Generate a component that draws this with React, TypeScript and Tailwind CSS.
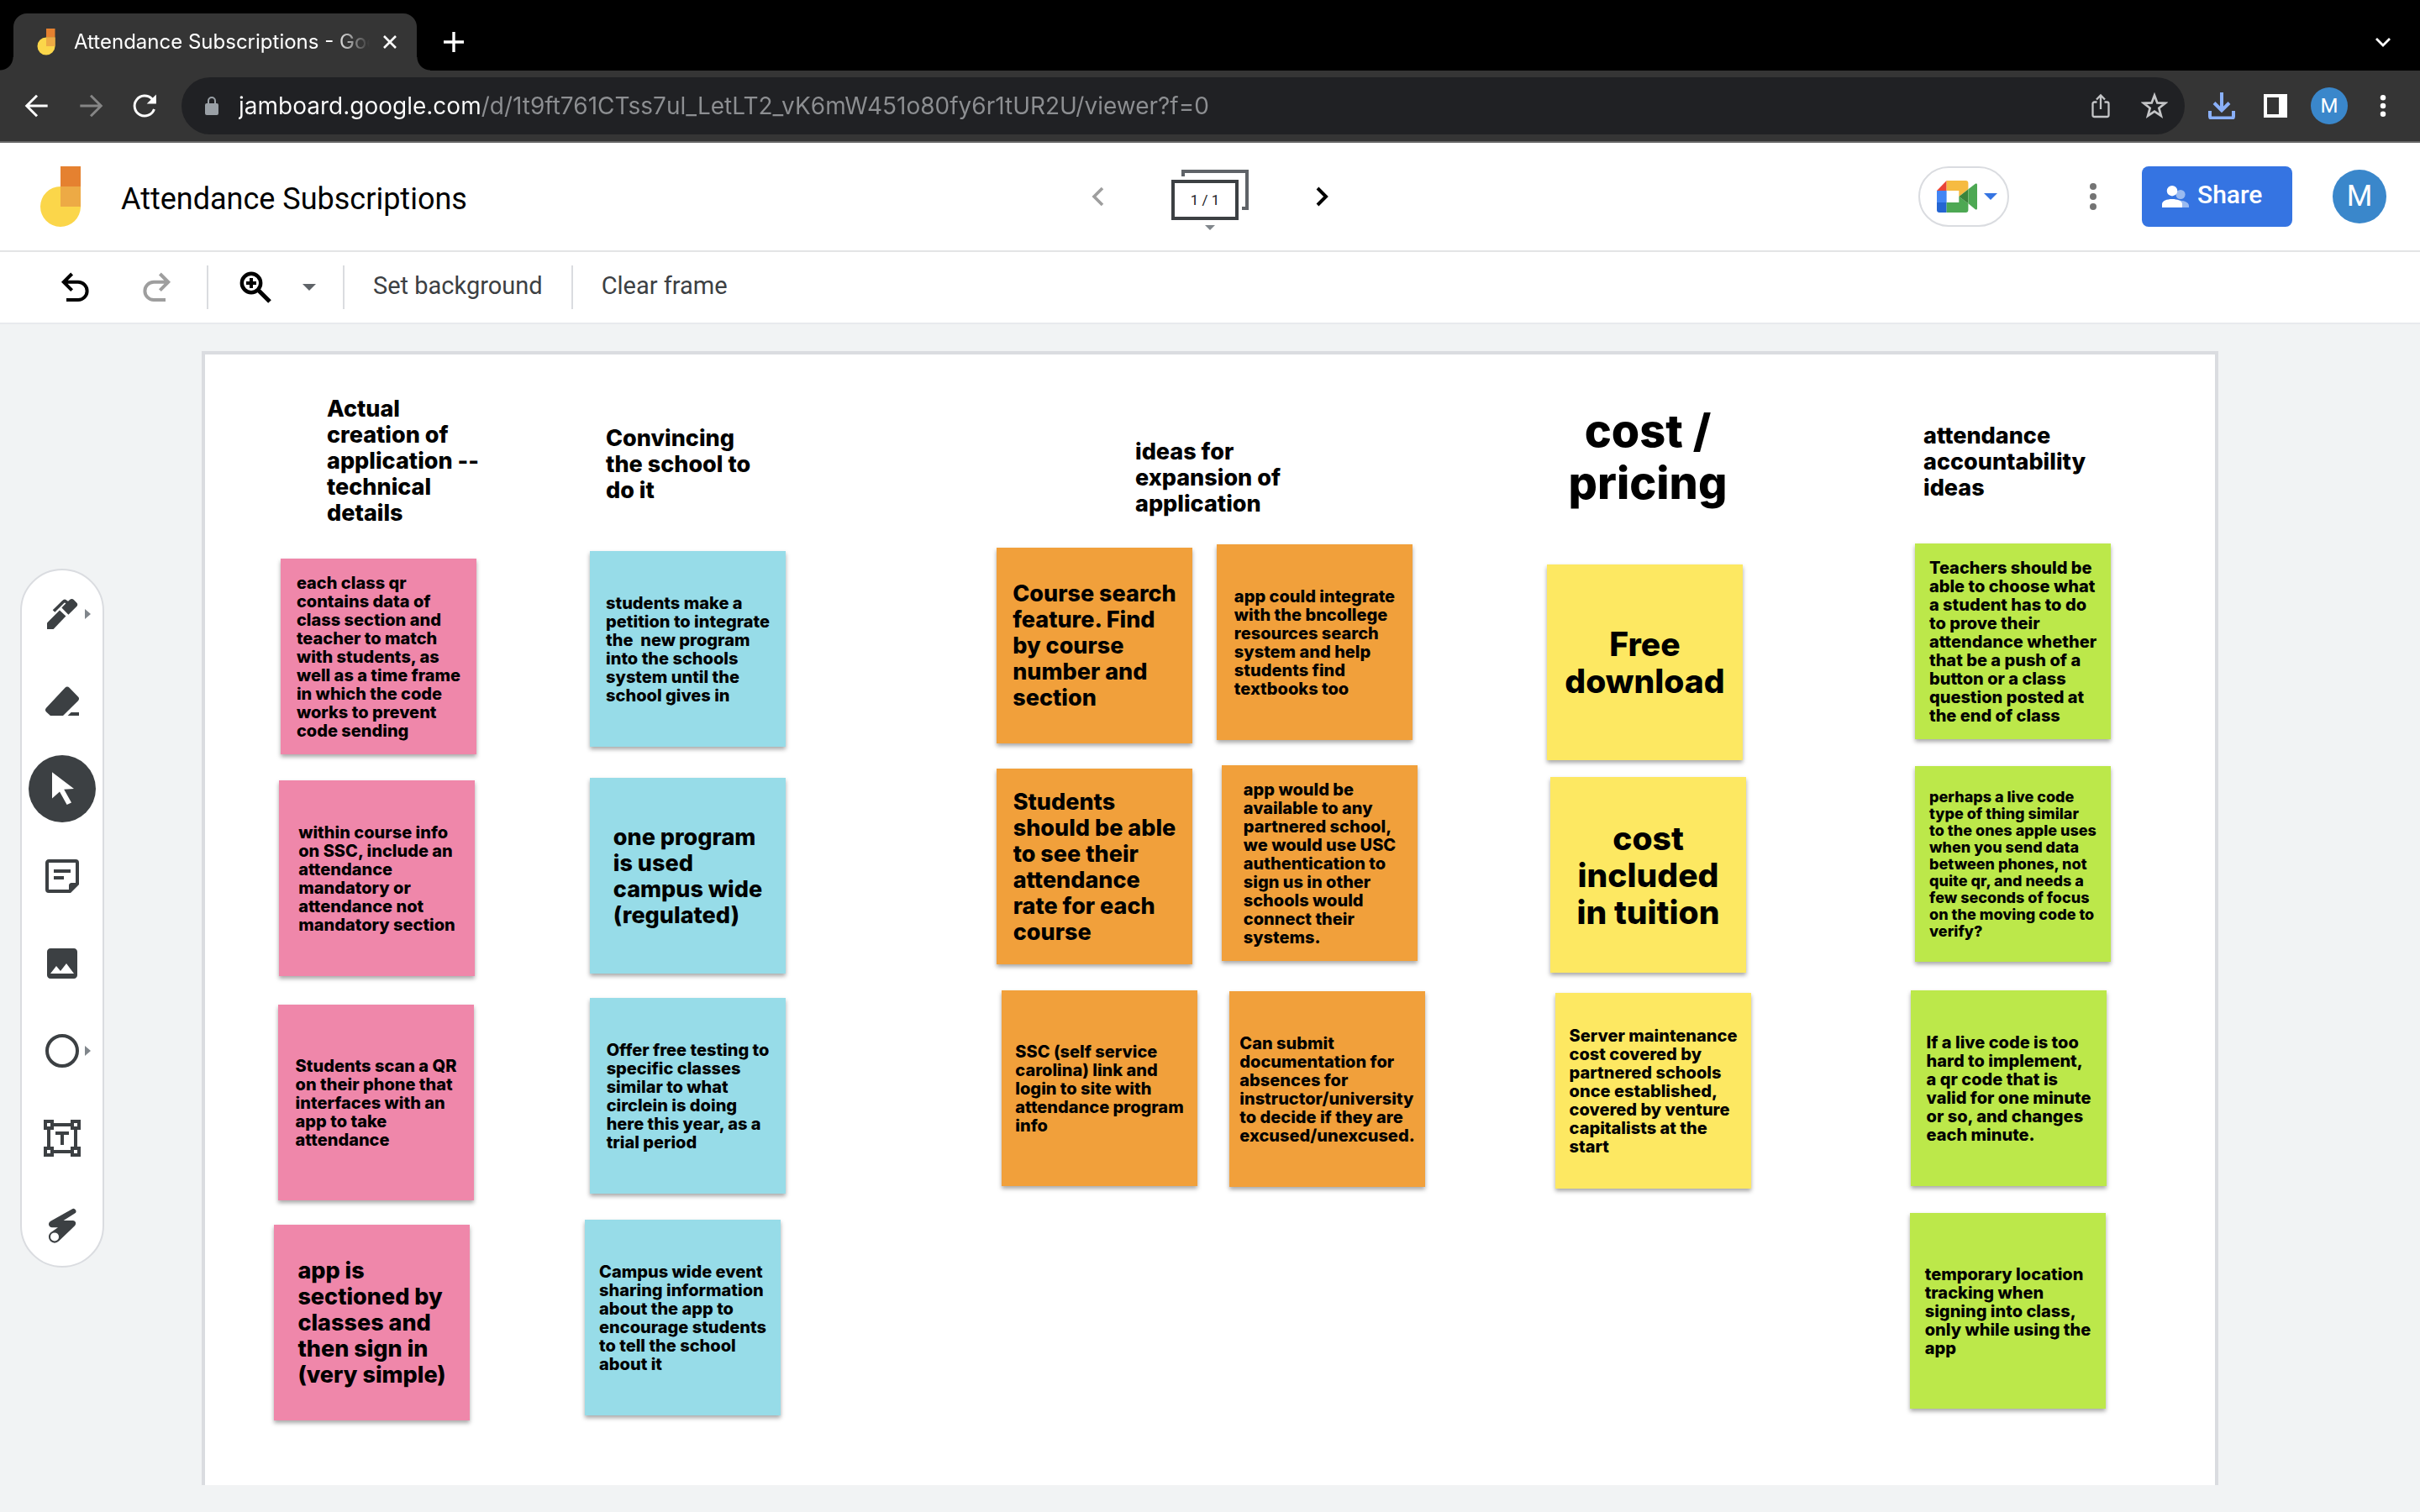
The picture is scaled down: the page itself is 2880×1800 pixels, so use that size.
import type { ReactNode } from "react";

type Note = { place: string; color: string; text: string; size?: string };

const SMALL = "text-[20px] leading-[22px]";
const TINY = "text-[18px] leading-[20px]";
const MEDIUM = "text-[27px] leading-[31px]";
const LARGE = "text-[39px] leading-[44px] text-center";

const PINK = "bg-[#ef87aa]";
const BLUE = "bg-[#97dce8]";
const ORANGE = "bg-[#f1a03b]";
const YELLOW = "bg-[#fde862]";
const GREEN = "bg-[#bce84a]";

// Sticky notes, placed freely on the frame.
const notes: Note[] = [
  { place: "left-[90px] top-[243px]", color: PINK, text: "each class qr\ncontains data of\nclass section and\nteacher to match\nwith students, as\nwell as a time frame\nin which the code\nworks to prevent\ncode sending" },
  { place: "left-[88px] top-[507px]", color: PINK, text: "within course info\non SSC, include an\nattendance\nmandatory or\nattendance not\nmandatory section" },
  { place: "left-[87px] top-[774px]", color: PINK, text: "Students scan a QR\non their phone that\ninterfaces with an\napp to take\nattendance" },
  { place: "left-[82px] top-[1036px]", color: PINK, size: MEDIUM, text: "app is\nsectioned by\nclasses and\nthen sign in\n(very simple)" },
  { place: "left-[458px] top-[234px]", color: BLUE, text: "students make a\npetition to integrate\nthe  new program\ninto the schools\nsystem until the\nschool gives in" },
  { place: "left-[458px] top-[504px]", color: BLUE, size: MEDIUM, text: "one program\nis used\ncampus wide\n(regulated)" },
  { place: "left-[458px] top-[766px]", color: BLUE, text: "Offer free testing to\nspecific classes\nsimilar to what\ncirclein is doing\nhere this year, as a\ntrial period" },
  { place: "left-[452px] top-[1030px]", color: BLUE, text: "Campus wide event\nsharing information\nabout the app to\nencourage students\nto tell the school\nabout it" },
  { place: "left-[942px] top-[230px]", color: ORANGE, size: MEDIUM, text: "Course search\nfeature. Find\nby course\nnumber and\nsection" },
  { place: "left-[1204px] top-[226px]", color: ORANGE, text: "app could integrate\nwith the bncollege\nresources search\nsystem and help\nstudents find\ntextbooks too" },
  { place: "left-[942px] top-[493px]", color: ORANGE, size: MEDIUM, text: "Students\nshould be able\nto see their\nattendance\nrate for each\ncourse" },
  { place: "left-[1210px] top-[489px]", color: ORANGE, text: "app would be\navailable to any\npartnered school,\nwe would use USC\nauthentication to\nsign us in other\nschools would\nconnect their\nsystems." },
  { place: "left-[948px] top-[757px]", color: ORANGE, text: "SSC (self service\ncarolina) link and\nlogin to site with\nattendance program\ninfo" },
  { place: "left-[1219px] top-[758px]", color: ORANGE, text: "Can submit\ndocumentation for\nabsences for\ninstructor/university\nto decide if they are\nexcused/unexcused." },
  { place: "left-[1597px] top-[250px]", color: YELLOW, size: LARGE, text: "Free\ndownload" },
  { place: "left-[1601px] top-[503px]", color: YELLOW, size: LARGE, text: "cost\nincluded\nin tuition" },
  { place: "left-[1607px] top-[760px]", color: YELLOW, text: "Server maintenance\ncost covered by\npartnered schools\nonce established,\ncovered by venture\ncapitalists at the\nstart" },
  { place: "left-[2035px] top-[225px]", color: GREEN, text: "Teachers should be\nable to choose what\na student has to do\nto prove their\nattendance whether\nthat be a push of a\nbutton or a class\nquestion posted at\nthe end of class" },
  { place: "left-[2035px] top-[490px]", color: GREEN, size: TINY, text: "perhaps a live code\ntype of thing similar\nto the ones apple uses\nwhen you send data\nbetween phones, not\nquite qr, and needs a\nfew seconds of focus\non the moving code to\nverify?" },
  { place: "left-[2030px] top-[757px]", color: GREEN, text: "If a live code is too\nhard to implement,\na qr code that is\nvalid for one minute\nor so, and changes\neach minute." },
  { place: "left-[2029px] top-[1022px]", color: GREEN, text: "temporary location\ntracking when\nsigning into class,\nonly while using the\napp" },
];

// Free-standing text boxes that title each group of notes.
const headings: { place: string; size: string; text: string }[] = [
  { place: "left-[145px] top-[49px]", size: MEDIUM, text: "Actual\ncreation of\napplication --\ntechnical\ndetails" },
  { place: "left-[477px] top-[84px]", size: MEDIUM, text: "Convincing\nthe school to\ndo it" },
  { place: "left-[1107px] top-[100px]", size: MEDIUM, text: "ideas for\nexpansion of\napplication" },
  { place: "left-[1597px] top-[60px] w-[240px]", size: "text-[54px] leading-[62px] text-center", text: "cost /\npricing" },
  { place: "left-[2045px] top-[81px]", size: MEDIUM, text: "attendance\naccountability\nideas" },
];

function Logo({ className }: { className: string }) {
  return (
    <svg viewBox="0 0 48 73" className={className} aria-hidden="true">
      <path d="M24 0h24v24H24z" fill="#e58130" />
      <path d="M24 24h24v24.5a24 24 0 1 1-24-24.5z" fill="#fbd64a" />
      <path d="M24 24h24v24H24z" fill="#edaa45" />
    </svg>
  );
}

function Icon({ children, className = "size-12", box = "0 0 24 24" }: { children: ReactNode; className?: string; box?: string }) {
  return (
    <svg viewBox={box} className={className} fill="currentColor" aria-hidden="true">
      {children}
    </svg>
  );
}

function Dots({ className }: { className: string }) {
  return (
    <Icon box="0 0 8 32" className={className}>
      <circle cx="4" cy="4" r="4" />
      <circle cx="4" cy="16" r="4" />
      <circle cx="4" cy="28" r="4" />
    </Icon>
  );
}

function Caret({ className }: { className: string }) {
  return (
    <Icon box="0 0 16 8" className={className}>
      <path d="M0 0h16L8 8z" />
    </Icon>
  );
}

function TabStrip() {
  return (
    <div className="flex h-[84px] items-end bg-black pl-4">
      <div className="relative flex h-[68px] w-[480px] items-center rounded-t-[16px] bg-[#353535] pl-7 pr-5">
        <span className="absolute -left-4 bottom-0 size-4 bg-[radial-gradient(circle_at_0_0,transparent_15px,#353535_16px)]" />
        <span className="absolute -right-4 bottom-0 size-4 bg-[radial-gradient(circle_at_100%_0,transparent_15px,#353535_16px)]" />
        <Logo className="h-8 w-[22px] shrink-0" />
        <span className="ml-[22px] flex-1 overflow-hidden whitespace-nowrap font-['Inter'] text-[24px] leading-8 text-white [mask-image:linear-gradient(90deg,#000_310px,transparent_352px)]">
          Attendance Subscriptions - Google Jamboard
        </span>
        <button aria-label="Close tab" className="grid size-6 shrink-0 place-items-center text-white">
          <Icon className="size-4" box="0 0 16 16">
            <path d="M1 1l14 14M15 1L1 15" stroke="currentColor" strokeWidth="2.6" />
          </Icon>
        </button>
      </div>
      <div className="flex h-[68px] flex-1 items-center justify-between pl-8 pr-[34px] text-white">
        <button aria-label="New tab">
          <Icon className="size-6">
            <path d="M12 0v24M0 12h24" stroke="currentColor" strokeWidth="3.4" />
          </Icon>
        </button>
        <button aria-label="Search tabs">
          <Icon className="h-3 w-5" box="0 0 20 12">
            <path d="M2 2l8 8 8-8" fill="none" stroke="currentColor" strokeWidth="2.8" />
          </Icon>
        </button>
      </div>
    </div>
  );
}

function AddressBar() {
  return (
    <div className="flex h-[86px] items-center border-b-2 border-[#666] bg-[#353535] pl-7 pr-10 text-white">
      <div className="flex items-center gap-8">
        <button aria-label="Back">
          <Icon className="size-8">
            <path d="M21.5 12H3M12 2.8L2.8 12l9.2 9.2" fill="none" stroke="currentColor" strokeWidth="2.2" />
          </Icon>
        </button>
        <button aria-label="Forward" className="text-[#868686]">
          <Icon className="size-8">
            <path d="M2.5 12H21M12 2.8l9.2 9.2-9.2 9.2" fill="none" stroke="currentColor" strokeWidth="2.2" />
          </Icon>
        </button>
        <button aria-label="Reload">
          <Icon className="size-8">
            <path d="M20.6 15A9 9 0 1 1 18.6 5.8L21.5 8.7" fill="none" stroke="currentColor" strokeWidth="2.2" />
            <path d="M22.4 1.8v8.4H14z" />
          </Icon>
        </button>
      </div>
      <div className="ml-7 flex h-[68px] flex-1 items-center rounded-full bg-[#202124] pl-7 pr-[20px]">
        <Icon className="h-[22px] w-4 text-[#9aa0a6]" box="0 0 16 22">
          <path d="M2 8h12a2 2 0 0 1 2 2v10a2 2 0 0 1-2 2H2a2 2 0 0 1-2-2V10a2 2 0 0 1 2-2z" />
          <path d="M4 9V5a4 4 0 0 1 8 0v4" fill="none" stroke="currentColor" strokeWidth="2" />
        </Icon>
        <input
          aria-label="Address"
          defaultValue="jamboard.google.com/d/1t9ft761CTss7ul_LetLT2_vK6mW451o80fy6r1tUR2U/viewer?f=0"
          className="ml-6 h-10 flex-1 bg-[linear-gradient(90deg,#fff_288px,#8d8f92_288px)] bg-clip-text font-['Inter'] text-[28px] leading-10 text-transparent caret-white outline-none"
        />
        <button aria-label="Share this page" className="mr-9 text-[#c4c5c7]">
          <Icon className="h-[30px] w-[24px]" box="0 0 24 30">
            <path d="M7.500 10.500H4.500a2 2 0 0 0-2 2v13.500a2 2 0 0 0 2 2h15a2 2 0 0 0 2-2V12.500a2 2 0 0 0-2-2h-3M12 19V3M7 7.500l5-5 5 5" fill="none" stroke="currentColor" strokeWidth="2.3" />
          </Icon>
        </button>
        <button aria-label="Bookmark this tab" className="text-[#c4c5c7]">
          <Icon className="size-8">
            <path d="M12 2.600l2.500 6.700 7.100.3-5.600 4.400 1.900 6.900-5.900-4-5.900 4L8 14 2.400 9.600l7.100-.3z" fill="none" stroke="currentColor" strokeWidth="2" />
          </Icon>
        </button>
      </div>
      <button aria-label="Downloads" className="ml-7 text-[#8ab0f8]">
        <Icon className="size-8" box="0 0 32 32">
          <path d="M2 22v6.500a2 2 0 0 0 2 2h24a2 2 0 0 0 2-2V22M16 0v22M7 12.500l9 9 9-9" fill="none" stroke="currentColor" strokeWidth="4" />
        </Icon>
      </button>
      <button aria-label="Side panel" className="ml-[34px]">
        <Icon className="size-7" box="0 0 28 28">
          <path fillRule="evenodd" d="M0 0h28v28H0zM4 4v20h14V4z" />
        </Icon>
      </button>
      <button aria-label="Profile" className="ml-7 grid size-11 place-items-center rounded-full bg-[#3a87cb] font-['Roboto'] text-[24px] leading-8">
        M
      </button>
      <button aria-label="Browser menu" className="ml-[38px]">
        <Dots className="h-[26px] w-2" />
      </button>
    </div>
  );
}

function Header() {
  return (
    <header className="grid h-[130px] grid-cols-[1fr_auto_1fr] items-center border-b-2 border-[#e3e4e5] bg-white px-10">
      <div className="flex items-center gap-12 pl-2">
        <a href="#home" aria-label="Jamboard home">
          <Logo className="h-[73px] w-12" />
        </a>
        <h1 className="pt-1.5 font-['Roboto'] text-[36px] leading-[44px] text-black">Attendance Subscriptions</h1>
      </div>
      <div className="flex items-center gap-20">
        <button aria-label="Previous frame" className="text-[#9e9e9e]">
          <Icon className="h-6 w-4" box="0 0 16 24">
            <path d="M14 2L4 12l10 10" fill="none" stroke="currentColor" strokeWidth="3.600" />
          </Icon>
        </button>
        <button aria-label="Show frames" className="relative h-[72px] w-[92px]">
          <span className="absolute right-0 top-1 h-12 w-20 border-4 border-[#5f6368]" />
          <span className="absolute left-0 top-3 h-[56px] w-[84px] bg-white" />
          <span className="absolute left-0 top-4 grid h-12 w-20 place-items-center border-4 border-[#3c4043] font-['Roboto'] text-[17px] leading-6 text-[#202124]">
            1 / 1
          </span>
          <Caret className="absolute left-10 top-[70px] h-[6px] w-3 text-[#80868b]" />
        </button>
        <button aria-label="Next frame" className="text-black">
          <Icon className="h-6 w-4" box="0 0 16 24">
            <path d="M2 2l10 10L2 22" fill="none" stroke="currentColor" strokeWidth="4" />
          </Icon>
        </button>
      </div>
      <div className="flex items-center justify-end">
        <button aria-label="Join a call" className="flex h-[72px] w-[108px] items-center gap-2 rounded-full border-2 border-[#dadce0] pl-5">
          <svg viewBox="0 0 48 38" className="h-[38px] w-12" aria-hidden="true">
            <path d="M11.600 0v12H0z" fill="#e94335" />
            <path d="M0 12h11.600v14H0z" fill="#4285f4" />
            <path d="M0 26h11.600v12H3a3 3 0 0 1-3-3z" fill="#2465d2" />
            <path d="M11.600 0h22.800a3 3 0 0 1 3 3v7.300L26.300 19v-7H11.600z" fill="#f6bb41" />
            <path d="M11.600 26h14.700v-7l11.100 8.300V35a3 3 0 0 1-3 3H11.600z" fill="#4da853" />
            <path d="M26.300 19l11.100-8.700v17z" fill="#3a843b" />
            <path d="M37.400 10.300l8.400-6.600c1-.7 2.200 0 2.200 1v28.600c0 1-1.200 1.700-2.200 1l-8.400-7z" fill="#4da853" />
          </svg>
          <Caret className="h-2 w-4 text-[#3574e2]" />
        </button>
        <button aria-label="More actions" className="ml-24 text-[#747474]">
          <Dots className="h-8 w-2" />
        </button>
        <button className="ml-[54px] flex h-[72px] w-[179px] items-center rounded-[8px] bg-[#3574e2] pl-6 font-['Roboto'] text-[30px] font-medium leading-9 text-white">
          <Icon className="mr-[10px] h-[26px] w-8" box="0 0 32 26">
            <g opacity=".5">
              <circle cx="22" cy="10.500" r="5.600" />
              <path d="M19 17.500c6 0 13 2 13 6.500v2H19z" />
            </g>
            <circle cx="12" cy="6.200" r="6.200" />
            <path d="M12 16c6 0 12 2 12 6v4H0v-4c0-4 6-6 12-6z" />
          </Icon>
          <span className="pb-1">Share</span>
        </button>
        <button aria-label="Account" className="ml-12 grid size-16 place-items-center rounded-full bg-[#3a87cb] font-['Roboto'] text-[35px] leading-10 text-white">
          M
        </button>
      </div>
    </header>
  );
}

function Divider() {
  return <span className="h-[52px] w-[2px] bg-[#dadce0]" />;
}

function Toolbar() {
  return (
    <div className="flex h-[86px] items-center border-b-2 border-[#e8eaed] bg-white pl-[68px] font-['Roboto'] text-[29px] leading-9 text-[#3c4043]">
      <button aria-label="Undo" className="text-black">
        <Icon>
          <path d="M5.500 19.500h7a5.300 5.300 0 0 0 0-10.600H4.500M8.800 4L3.900 8.900l4.900 4.900" fill="none" stroke="currentColor" strokeWidth="2" />
        </Icon>
      </button>
      <button aria-label="Redo" className="ml-11 text-[#9e9e9e]">
        <Icon>
          <path d="M18.500 19.500h-7a5.300 5.300 0 0 1 0-10.600H19.500M15.200 4l4.900 4.900-4.900 4.900" fill="none" stroke="currentColor" strokeWidth="2" />
        </Icon>
      </button>
      <span className="w-[38px]" />
      <Divider />
      <button aria-label="Zoom in" className="ml-8 text-black">
        <Icon>
          <circle cx="9.500" cy="9.500" r="5.600" fill="none" stroke="currentColor" strokeWidth="2.200" />
          <path d="M14 14l6.500 6.500" stroke="currentColor" strokeWidth="2.600" />
          <path d="M9.500 6.500v6M6.500 9.500h6" stroke="currentColor" strokeWidth="2" />
        </Icon>
      </button>
      <button aria-label="Zoom options" className="mx-8 text-[#5f6368]">
        <Caret className="h-2 w-4" />
      </button>
      <Divider />
      <button className="mx-[34px] pb-1">Set background</button>
      <Divider />
      <button className="mx-[34px] pb-1">Clear frame</button>
    </div>
  );
}

const tools: { label: string; icon: ReactNode; more?: boolean; selected?: boolean }[] = [
  {
    label: "Pen",
    more: true,
    icon: (
      <>
        <path d="M3 21v-3.800l7.500-7.400 3.700 3.500L6.800 21z" />
        <path d="M11.700 8.200l1.300-1.300 2-2 1.500-1.400c.8-.7 1.700-.7 2.400 0l1.700 1.700c.7.700.7 1.600 0 2.300l-4.900 4.900z" />
        <path d="M7 10.300l5.600-5.600c.6-.6 1.200-.6 1.800 0l1.100 1" fill="none" stroke="currentColor" strokeWidth="1.800" />
      </>
    ),
  },
  {
    label: "Erase",
    icon: (
      <>
        <path d="M13.700 3.900c.8-.8 1.800-.8 2.600 0l5.200 5.300c.7.700.7 1.600 0 2.400l-9 8.900H5l-2.500-2.300c-.7-.7-.7-1.500 0-2.300z" />
        <path d="M15.300 20.500l2-2H22v2z" />
      </>
    ),
  },
  { label: "Select", selected: true, icon: <path d="M6 2.100L19 12l-5.900.4 4.400 7.900-2.700 1.200-4.300-7.800L6 17.700z" /> },
  {
    label: "Sticky note",
    icon: (
      <>
        <path fillRule="evenodd" d="M4 2h16a2 2 0 0 1 2 2v13l-5 5H4a2 2 0 0 1-2-2V4c0-1.100.9-2 2-2zm0 2v16h12v-2.500c0-.8.700-1.500 1.500-1.500H20V4z" />
        <path d="M7 8h10v2H7zM7 12h6v2H7z" />
      </>
    ),
  },
  { label: "Add image", icon: <path d="M21 19V5c0-1.100-.9-2-2-2H5c-1.100 0-2 .9-2 2v14c0 1.100.9 2 2 2h14c1.100 0 2-.9 2-2zM8.500 13.500l2.500 3.010L14.500 12l4.500 6H5z" /> },
  { label: "Circle", more: true, icon: <circle cx="12" cy="12" r="9" fill="none" stroke="currentColor" strokeWidth="2" /> },
  {
    label: "Text box",
    icon: (
      <>
        <path fillRule="evenodd" d="M1 1h6v2h10V1h6v6h-2v10h2v6h-6v-2H7v2H1v-6h2V7H1zM3 3v2h2V3zM19 3v2h2V3zM3 19v2h2v-2zM19 19v2h2v-2zM7 5v2H5v10h2v2h10v-2h2V7h-2V5z" />
        <path d="M8 8h8v2h-3v6h-2v-6H8z" />
      </>
    ),
  },
  {
    label: "Laser",
    icon: (
      <>
        <path d="M17.800 2.200a1.550 1.550 0 0 1 1.700 2.600L12.800 9h5.600c1.700 0 2.200 2 1.100 3.100L10 21.300a3.500 3.500 0 0 1-5-5l4.500-3.200H6c-2.200 0-2.700-2.700-.9-3.700z" />
        <circle cx="7.500" cy="18.700" r="2.500" fill="#fff" />
      </>
    ),
  },
];

function ToolRail() {
  return (
    <nav aria-label="Drawing tools" className="flex w-[240px] shrink-0 items-center pl-6">
      <div className="flex flex-col gap-6 rounded-[50px] border-2 border-[#dadce0] bg-white px-2 pb-2 pt-3 text-[#3c4043]">
        {tools.map((tool) => (
          <button
            key={tool.label}
            aria-label={tool.label}
            className={
              tool.selected
                ? "grid size-20 place-items-center rounded-full bg-[#3c4043] text-white"
                : "relative grid size-20 place-items-center rounded-full"
            }
          >
            <Icon>{tool.icon}</Icon>
            {tool.more && (
              <Icon className="absolute right-[6px] top-[34px] h-3 w-[7px] text-[#80868b]" box="0 0 7 12">
                <path d="M0 0l7 6-7 6z" />
              </Icon>
            )}
          </button>
        ))}
      </div>
    </nav>
  );
}

function Board() {
  return (
    <main className="relative mb-8 mr-[240px] mt-8 flex-1 overflow-hidden border-4 border-b-0 border-[#dadce0] bg-white font-['Inter',sans-serif] font-extrabold text-black">
      {headings.map((h) => (
        <h2 key={h.text} className={`absolute whitespace-pre ${h.place} ${h.size}`}>
          {h.text}
        </h2>
      ))}
      {notes.map((n) => (
        <article
          key={n.text}
          className={`absolute grid size-[233px] place-items-center shadow-[0_3px_5px_rgba(0,0,0,0.35)] ${n.place} ${n.color}`}
        >
          <p className={`whitespace-pre ${n.size ?? SMALL}`}>{n.text}</p>
        </article>
      ))}
    </main>
  );
}

export default function App() {
  return (
    <div className="flex min-h-screen flex-col bg-[#f1f3f4]">
      <TabStrip />
      <AddressBar />
      <Header />
      <Toolbar />
      <div className="flex flex-1">
        <ToolRail />
        <Board />
      </div>
    </div>
  );
}
